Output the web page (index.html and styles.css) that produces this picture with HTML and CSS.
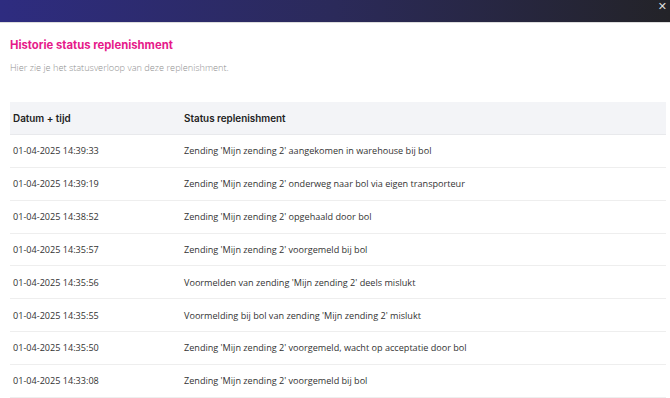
FILE: index.html
```html
<!DOCTYPE html>
<html lang="nl">
<head>
<meta charset="utf-8">
<title>Historie status replenishment</title>
<link rel="stylesheet" href="styles.css">
</head>
<body>
<div class="topbar">
  <span class="close">&#10005;</span>
</div>

<div class="content">
  <h2 class="title">Historie status replenishment</h2>
  <p class="intro">Hier zie je het statusverloop van deze replenishment.</p>

  <table class="history">
    <thead>
      <tr>
        <th class="col-date">Datum + tijd</th>
        <th>Status replenishment</th>
      </tr>
    </thead>
    <tbody>
      <tr><td>01-04-2025 14:39:33</td><td>Zending 'Mijn zending 2' aangekomen in warehouse bij bol</td></tr>
      <tr><td>01-04-2025 14:39:19</td><td>Zending 'Mijn zending 2' onderweg naar bol via eigen transporteur</td></tr>
      <tr><td>01-04-2025 14:38:52</td><td>Zending 'Mijn zending 2' opgehaald door bol</td></tr>
      <tr><td>01-04-2025 14:35:57</td><td>Zending 'Mijn zending 2' voorgemeld bij bol</td></tr>
      <tr><td>01-04-2025 14:35:56</td><td>Voormelden van zending 'Mijn zending 2' deels mislukt</td></tr>
      <tr><td>01-04-2025 14:35:55</td><td>Voormelding bij bol van zending 'Mijn zending 2' mislukt</td></tr>
      <tr><td>01-04-2025 14:35:50</td><td>Zending 'Mijn zending 2' voorgemeld, wacht op acceptatie door bol</td></tr>
      <tr><td>01-04-2025 14:33:08</td><td>Zending 'Mijn zending 2' voorgemeld bij bol</td></tr>
    </tbody>
  </table>
</div>
</body>
</html>
```

FILE: styles.css
```css
body {
  margin: 0;
  background: #fff;
  font-family: 'Open Sans', sans-serif;
  color: #333;
}
.topbar {
  display: flex;
  justify-content: flex-end;
  align-items: flex-start;
  height: 22px;
  background: linear-gradient(90deg, #2e2c80 0%, #2b2a5a 50%, #232328 100%);
  border-bottom: 1px solid #ddd;
}
.close {
  color: #ddd;
  font-family: 'DejaVu Sans', sans-serif;
  font-size: 11px;
  line-height: 12px;
  padding: 1px 3px 0 0;
}
.content {
  padding: 0 4px 0 10px;
}
.title {
  margin: 0;
  padding-top: 15px;
  font-family: Inter, sans-serif;
  font-size: 11.3px;
  font-weight: 700;
  line-height: 14px;
  color: #e6198a;
}
.intro {
  margin: 9px 0 0;
  font-size: 9.2px;
  font-weight: 300;
  line-height: 14px;
  color: #8f8f8f;
}
.history {
  width: 100%;
  margin-top: 27px;
  border-collapse: collapse;
  font-size: 9.1px;
}
.history th {
  height: 32px;
  padding: 0 3px;
  background: #f3f4f7;
  font-family: Inter, sans-serif;
  font-weight: 600;
  font-size: 9.9px;
  text-align: left;
  color: #222;
  border-bottom: 1px solid #e8e9ec;
}
.history th.col-date {
  width: 165px;
}
.history td {
  height: 31.85px;
  padding: 0 3px;
  border-bottom: 1px solid #eeeeee;
  color: #333;
}
```
